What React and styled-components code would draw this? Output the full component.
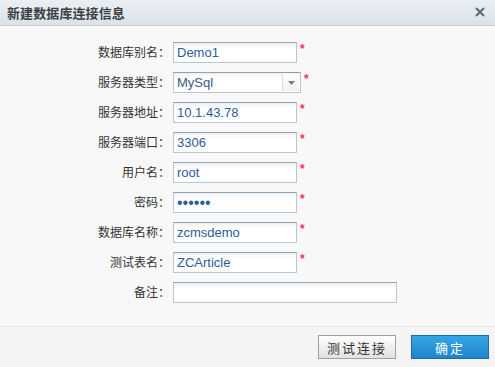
import styled, { createGlobalStyle } from 'styled-components';

const GlobalStyle = createGlobalStyle`
  html, body {
    margin: 0;
    padding: 0;
    background: #f8f8f8;
  }
  * { box-sizing: border-box; }
`;

const Dialog = styled.div`
  width: 495px;
  height: 367px;
  display: flex;
  flex-direction: column;
  font-family: "Noto Sans CJK SC", "Liberation Sans", sans-serif;
  font-size: 12px;
  color: #333;
  overflow: hidden;
`;

const Header = styled.div`
  height: 26px;
  flex: none;
  display: flex;
  align-items: center;
  justify-content: space-between;
  padding: 0 10px 1px 7px;
  background: linear-gradient(#eaeff3, #dce3e8);
  border-bottom: 1px solid #c9d1d8;
`;

const Title = styled.div`
  font-size: 13px;
  font-weight: bold;
  color: #3b3f44;
  letter-spacing: 0.1px;
`;

const Close = styled.div`
  width: 11px;
  height: 11px;
  display: flex;
  align-items: center;
  justify-content: center;
`;

const Body = styled.div`
  height: 301px;
  flex: none;
  padding-top: 16px;
  background: #f8f8f8;
  border-bottom: 1px solid #e6e6e6;
  display: flex;
  flex-direction: column;
  gap: 9px;
`;

const Row = styled.div`
  display: grid;
  grid-template-columns: 170px max-content 10px;
  justify-content: start;
  column-gap: 3px;
  align-items: start;
  height: 21px;
`;

const Label = styled.label`
  text-align: right;
  line-height: 19px;
  white-space: nowrap;
`;

const Input = styled.input`
  width: ${p => p.$width || 124}px;
  height: 21px;
  margin: 0;
  padding: 0 3px;
  border: 1px solid #b7c7d7;
  border-top-color: #8fa2b4;
  background: linear-gradient(#f0f0f0, #ffffff 5px);
  font-family: Tahoma, "Liberation Sans", sans-serif;
  font-size: ${p => (p.type === 'password' ? 16 : 13)}px;
  color: #2d5c9c;
  outline: none;
`;

const SelectBox = styled.div`
  width: 128px;
  height: 21px;
  display: flex;
  border: 1px solid #b7c7d7;
  border-top-color: #8fa2b4;
  background: linear-gradient(#f0f0f0, #ffffff 5px);
`;

const SelectText = styled.div`
  flex: 1;
  padding: 0 3px;
  line-height: 19px;
  font-family: Tahoma, "Liberation Sans", sans-serif;
  font-size: 13px;
  color: #3c5a80;
`;

const SelectArrow = styled.div`
  width: 17px;
  margin: 1px;
  border-left: 1px solid #d8dde2;
  background: linear-gradient(#ffffff, #f1f1f1);
  display: flex;
  align-items: center;
  justify-content: center;
`;

const Required = styled.span`
  color: #ff2a55;
  font-family: "Liberation Sans", sans-serif;
  font-size: 12px;
  line-height: 14px;
  font-weight: bold;
`;

const Footer = styled.div`
  flex: 1;
  background: #f4f4f4;
  display: flex;
  justify-content: flex-end;
  align-items: flex-start;
  gap: 15px;
  padding: 8px 6px 0 0;
`;

const Button = styled.button`
  width: 78px;
  height: 24px;
  margin: 0;
  padding: 0;
  font-family: "Noto Sans CJK SC", "Liberation Sans", sans-serif;
  font-size: 13px;
  letter-spacing: 2px;
  cursor: pointer;
  border: 1px solid ${p => (p.$primary ? '#1d6aa6' : '#a0a0a0')};
  color: ${p => (p.$primary ? '#ffffff' : '#333333')};
  background: ${p =>
    p.$primary
      ? 'linear-gradient(#33a6e6, #1f86cb)'
      : 'linear-gradient(#ffffff, #e2e2e2)'};
`;

const fields = [
  { label: '数据库别名：', value: 'Demo1', required: true },
  { label: '服务器类型：', value: 'MySql', required: true, select: true },
  { label: '服务器地址：', value: '10.1.43.78', required: true },
  { label: '服务器端口：', value: '3306', required: true },
  { label: '用户名：', value: 'root', required: true },
  { label: '密码：', value: '123456', required: true, type: 'password' },
  { label: '数据库名称：', value: 'zcmsdemo', required: true },
  { label: '测试表名：', value: 'ZCArticle', required: true },
  { label: '备注：', value: '', width: 224 },
];

export default function App() {
  return (
    <>
      <GlobalStyle />
      <Dialog>
        <Header>
          <Title>新建数据库连接信息</Title>
          <Close>
            <svg width="10" height="10" viewBox="0 0 10 10">
              <path d="M1 1L9 9M9 1L1 9" stroke="#56687a" strokeWidth="2" />
            </svg>
          </Close>
        </Header>
        <Body>
          {fields.map(f => (
            <Row key={f.label}>
              <Label>{f.label}</Label>
              {f.select ? (
                <SelectBox>
                  <SelectText>{f.value}</SelectText>
                  <SelectArrow>
                    <svg width="7" height="4" viewBox="0 0 7 4">
                      <path d="M0 0H7L3.5 4Z" fill="#7a7a7a" />
                    </svg>
                  </SelectArrow>
                </SelectBox>
              ) : (
                <Input
                  type={f.type || 'text'}
                  defaultValue={f.value}
                  $width={f.width}
                />
              )}
              {f.required ? <Required>*</Required> : <span />}
            </Row>
          ))}
        </Body>
        <Footer>
          <Button>测试连接</Button>
          <Button $primary>确定</Button>
        </Footer>
      </Dialog>
    </>
  );
}
